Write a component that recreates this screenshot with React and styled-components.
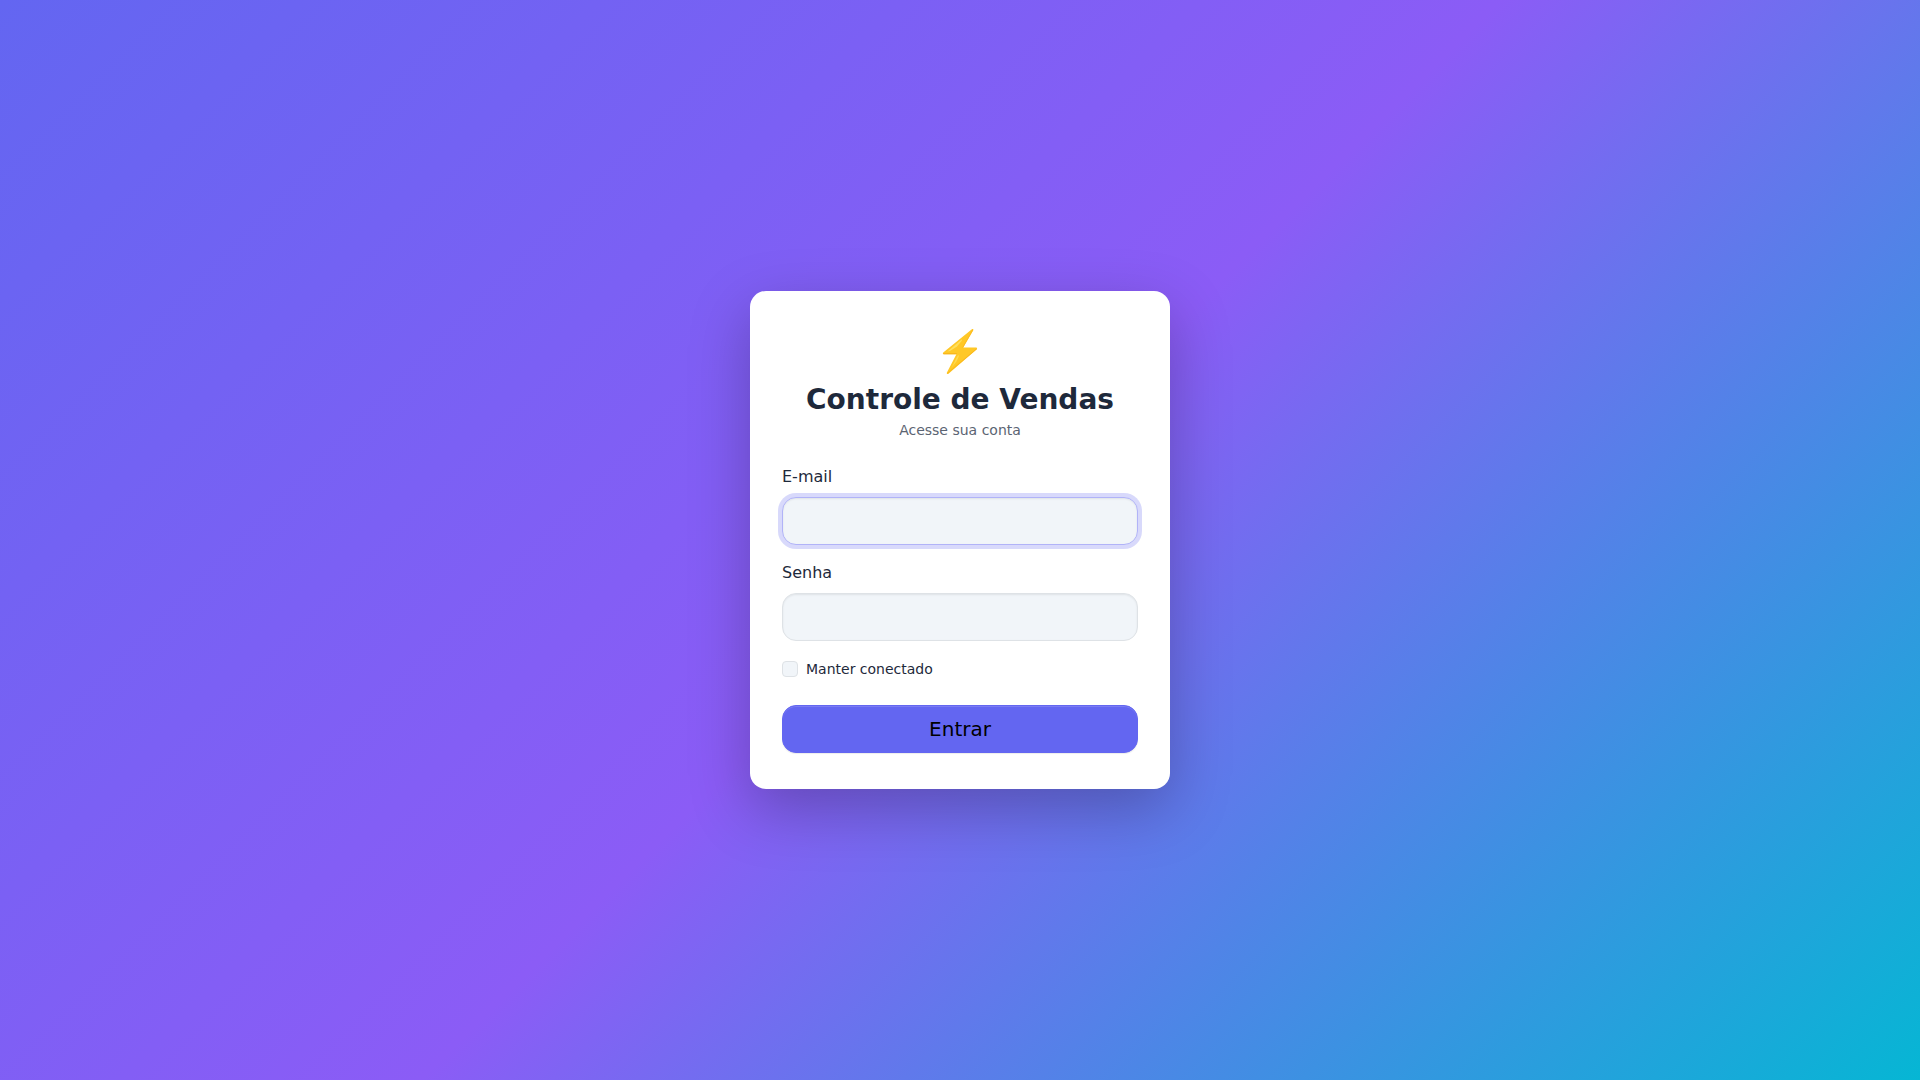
import { useState } from "react";
import styled, { createGlobalStyle } from "styled-components";

const GlobalStyle = createGlobalStyle`
  *, *::before, *::after {
    box-sizing: border-box;
  }
  body {
    margin: 0;
    font-family: "DejaVu Sans", sans-serif;
    font-size: 16px;
    line-height: 24px;
    color: #1e293b;
  }
`;

const Page = styled.main`
  min-height: 100vh;
  display: flex;
  align-items: center;
  justify-content: center;
  background: linear-gradient(135deg, #6366f1 0%, #8b5cf6 50%, #06b6d4 100%);
`;

const Card = styled.section`
  width: 100%;
  max-width: 420px;
  padding: 36px 32px;
  border-radius: 16px;
  background: #ffffff;
  box-shadow: 0 20px 60px rgba(0, 0, 0, 0.25);
`;

const Header = styled.header`
  margin-bottom: 24px;
  text-align: center;
`;

const Logo = styled.svg`
  display: block;
  width: 48px;
  height: 48px;
  margin: 0 auto 8px;
`;

const Title = styled.h1`
  margin: 0 0 4px;
  font-size: 28px;
  font-weight: 700;
  line-height: 33px;
`;

const Subtitle = styled.p`
  margin: 0;
  font-size: 14px;
  line-height: 21px;
  color: #5b6472;
`;

const Form = styled.form`
  display: flex;
  flex-direction: column;
  gap: 16px;
`;

const Field = styled.div`
  display: flex;
  flex-direction: column;
  gap: 8px;
`;

const Input = styled.input`
  width: 100%;
  height: 48px;
  padding: 0 16px;
  border: 1px solid #dee2e6;
  border-radius: 14px;
  outline: none;
  background: #f1f5f9;
  box-shadow: inset 0 1px 2px rgba(0, 0, 0, 0.075);
  color: inherit;
  font: inherit;

  &:focus {
    border-color: #b1b3f8;
    box-shadow: inset 0 1px 2px rgba(0, 0, 0, 0.075),
      0 0 0 4px rgba(99, 102, 241, 0.25);
  }
`;

const CheckRow = styled.div`
  display: flex;
  align-items: center;
  gap: 8px;
  height: 24px;
  margin-bottom: 8px;
`;

const CheckBox = styled.input`
  appearance: none;
  width: 16px;
  height: 16px;
  margin: 0;
  border: 1px solid #dee2e6;
  border-radius: 4px;
  background: #f1f5f9;

  &:checked {
    border-color: #6366f1;
    background: #6366f1;
  }
`;

const CheckLabel = styled.label`
  font-size: 14px;
`;

const Button = styled.button`
  width: 100%;
  height: 48px;
  border: 1px solid #6366f1;
  border-radius: 14px;
  background: #6366f1;
  box-shadow: inset 0 1px 0 rgba(255, 255, 255, 0.15),
    0 1px 1px rgba(0, 0, 0, 0.075);
  color: #000000;
  font-family: inherit;
  font-size: 20px;
  line-height: 30px;
  cursor: pointer;
`;

function Bolt() {
  return (
    <Logo viewBox="0 0 48 48" aria-hidden="true">
      <path
        d="M36.2 2.1 7.2 25.4Q6.2 27 7.6 27.3H20.4L10.8 45.8Q10.6 47.6 12.2 46.9L40.8 22.2Q41.8 20.6 40.2 20.5H27.2L37.3 3Q37.6 1.4 36.2 2.1Z"
        fill="#ffc827"
      />
      <path d="M6.9 26.2 7.6 27.3H20.4L21.2 26.2Z" fill="#f7b21a" />
      <path d="M37.3 3 27.2 20.5 26 20.7 36.4 2.4Z" fill="#fdbb20" />
      <path d="M11.2 47.1 40.8 22.2 40.4 21.4 11.6 45.8Z" fill="#fab61c" />
      <path d="M11.4 24.4 25.6 12.6Q26.6 12.4 25.6 14L21 19.6 14 24Z" fill="#ffdf5c" />
      <path d="M21.6 28.8 23 28.2Q23.4 28.6 20.4 34.4L15.4 41Z" fill="#ffda50" />
    </Logo>
  );
}

function App() {
  const [email, setEmail] = useState("");
  const [senha, setSenha] = useState("");
  const [manter, setManter] = useState(false);

  const handleSubmit = (e) => {
    e.preventDefault();
  };

  return (
    <>
      <GlobalStyle />
      <Page>
        <Card>
          <Header>
            <Bolt />
            <Title>Controle de Vendas</Title>
            <Subtitle>Acesse sua conta</Subtitle>
          </Header>
          <Form onSubmit={handleSubmit}>
            <Field>
              <label htmlFor="email">E-mail</label>
              <Input
                id="email"
                type="email"
                value={email}
                onChange={(e) => setEmail(e.target.value)}
                required
                autoFocus
              />
            </Field>
            <Field>
              <label htmlFor="senha">Senha</label>
              <Input
                id="senha"
                type="password"
                value={senha}
                onChange={(e) => setSenha(e.target.value)}
                required
              />
            </Field>
            <CheckRow>
              <CheckBox
                id="manter"
                type="checkbox"
                checked={manter}
                onChange={(e) => setManter(e.target.checked)}
              />
              <CheckLabel htmlFor="manter">Manter conectado</CheckLabel>
            </CheckRow>
            <Button type="submit">Entrar</Button>
          </Form>
        </Card>
      </Page>
    </>
  );
}

export default App;
